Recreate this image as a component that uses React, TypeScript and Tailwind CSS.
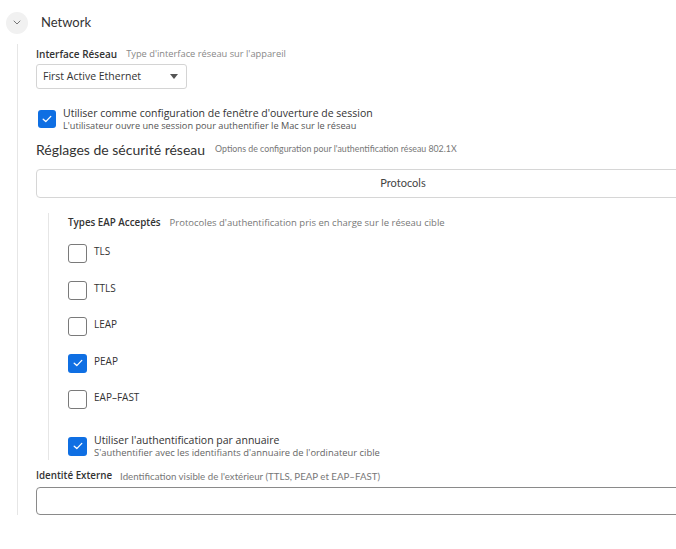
function Check({ checked, size = 19 }: { checked: boolean; size?: number }) {
  return (
    <div
      className={
        checked
          ? "flex shrink-0 items-center justify-center rounded-[3px] bg-[#0f6fe3]"
          : "flex shrink-0 items-center justify-center rounded-[3px] border border-[#7a7a7a] bg-white"
      }
      style={{ width: size, height: size }}
    >
      {checked && (
        <svg width="10" height="8" viewBox="0 0 10 8" fill="none">
          <path d="M1.2 4.2 L3.8 6.6 L8.8 1.4" stroke="white" strokeWidth="1.3" strokeLinecap="round" strokeLinejoin="round" />
        </svg>
      )}
    </div>
  );
}

const eapTypes = [
  { name: "TLS", on: false },
  { name: "TTLS", on: false },
  { name: "LEAP", on: false },
  { name: "PEAP", on: true },
  { name: "EAP–FAST", on: false },
];

export default function App() {
  return (
    <div className="h-[549px] w-[676px] overflow-hidden bg-white text-[#333] [font-family:'Open_Sans',sans-serif]">
      {/* header */}
      <div className="flex h-[45px] items-center pl-[6px]">
        <div className="flex h-[22px] w-[22px] items-center justify-center rounded-full bg-[#f1f1f1]">
          <svg width="8" height="5" viewBox="0 0 8 5" fill="none">
            <path d="M1 1 L4 4 L7 1" stroke="#777" strokeWidth="1" strokeLinecap="round" />
          </svg>
        </div>
        <span className="ml-[13px] text-[13px] text-[#333] [font-family:Lato,sans-serif]">Network</span>
      </div>

      <div className="-mt-[1px] ml-[17px] w-[760px] border-l border-[#e6e6e6] pl-[18px]">
        <div className="box-content flex h-[14px] items-center gap-[9px] pt-[3px]">
          <span className="text-[10px] font-semibold text-[#333]">Interface Réseau</span>
          <span className="text-[9.3px] text-[#888]">Type d'interface réseau sur l'appareil</span>
        </div>

        <div className="mt-[3px] flex h-[25px] w-[151px] items-center justify-between rounded-[3px] border border-[#d4d4d4] pl-[6px] pr-[8px]">
          <span className="text-[10.5px] text-[#333]">First Active Ethernet</span>
          <svg width="8" height="5" viewBox="0 0 8 5">
            <path d="M0 0 L8 0 L4 5 Z" fill="#555" />
          </svg>
        </div>

        <div className="mt-[18px] flex items-center gap-[7px] pl-[2px]">
          <Check checked size={18} />
          <div className="flex flex-col">
            <span className="text-[10.5px] leading-[13px] text-[#333]">Utiliser comme configuration de fenêtre d'ouverture de session</span>
            <span className="text-[9.2px] leading-[11px] text-[#555]">L'utilisateur ouvre une session pour authentifier le Mac sur le réseau</span>
          </div>
        </div>

        <div className="mt-[9px] flex h-[18px] items-center gap-[10px]">
          <span className="text-[14px] text-[#333] [font-family:Lato,sans-serif]">Réglages de sécurité réseau</span>
          <span className="text-[8.8px] text-[#777] [font-family:Lato,sans-serif]">Options de configuration pour l'authentification réseau 802.1X</span>
        </div>

        <div className="mt-[11px] flex h-[29px] w-[734px] items-center justify-center rounded-[4px] border border-[#d6d6d6]">
          <span className="text-[11px] text-[#444] [font-family:Lato,sans-serif]">Protocols</span>
        </div>

        <div className="ml-[12px] mt-[15px] border-l border-[#e6e6e6] pb-[2px] pl-[19px] pt-[3px]">
          <div className="flex h-[14px] items-center gap-[9px]">
            <span className="text-[9.8px] font-semibold text-[#333]">Types EAP Acceptés</span>
            <span className="text-[9.5px] text-[#777]">Protocoles d'authentification pris en charge sur le réseau cible</span>
          </div>

          <div className="mt-[14px] flex flex-col gap-[17.5px]">
            {eapTypes.map((t) => (
              <div key={t.name} className="flex h-[19px] items-center gap-[7px]">
                <Check checked={t.on} />
                <span className="-mt-[4px] text-[10px] text-[#333]">{t.name}</span>
              </div>
            ))}
          </div>

          <div className="mt-[25px] flex items-center gap-[7px]">
            <Check checked />
            <div className="flex flex-col">
              <span className="text-[10.5px] leading-[13px] text-[#333]">Utiliser l'authentification par annuaire</span>
              <span className="text-[9.4px] leading-[11px] text-[#666]">S'authentifier avec les identifiants d'annuaire de l'ordinateur cible</span>
            </div>
          </div>
        </div>

        <div className="mt-[9px] flex h-[14px] items-center gap-[8px]">
          <span className="text-[9.8px] font-semibold text-[#333]">Identité Externe</span>
          <span className="text-[9.7px] text-[#777] [font-family:Lato,sans-serif]">Identification visible de l'extérieur (TTLS, PEAP et EAP–FAST)</span>
        </div>

        <div className="mt-[4px] h-[28px] w-[734px] rounded-[4px] border border-[#8a8a8a]" />
      </div>
    </div>
  );
}
